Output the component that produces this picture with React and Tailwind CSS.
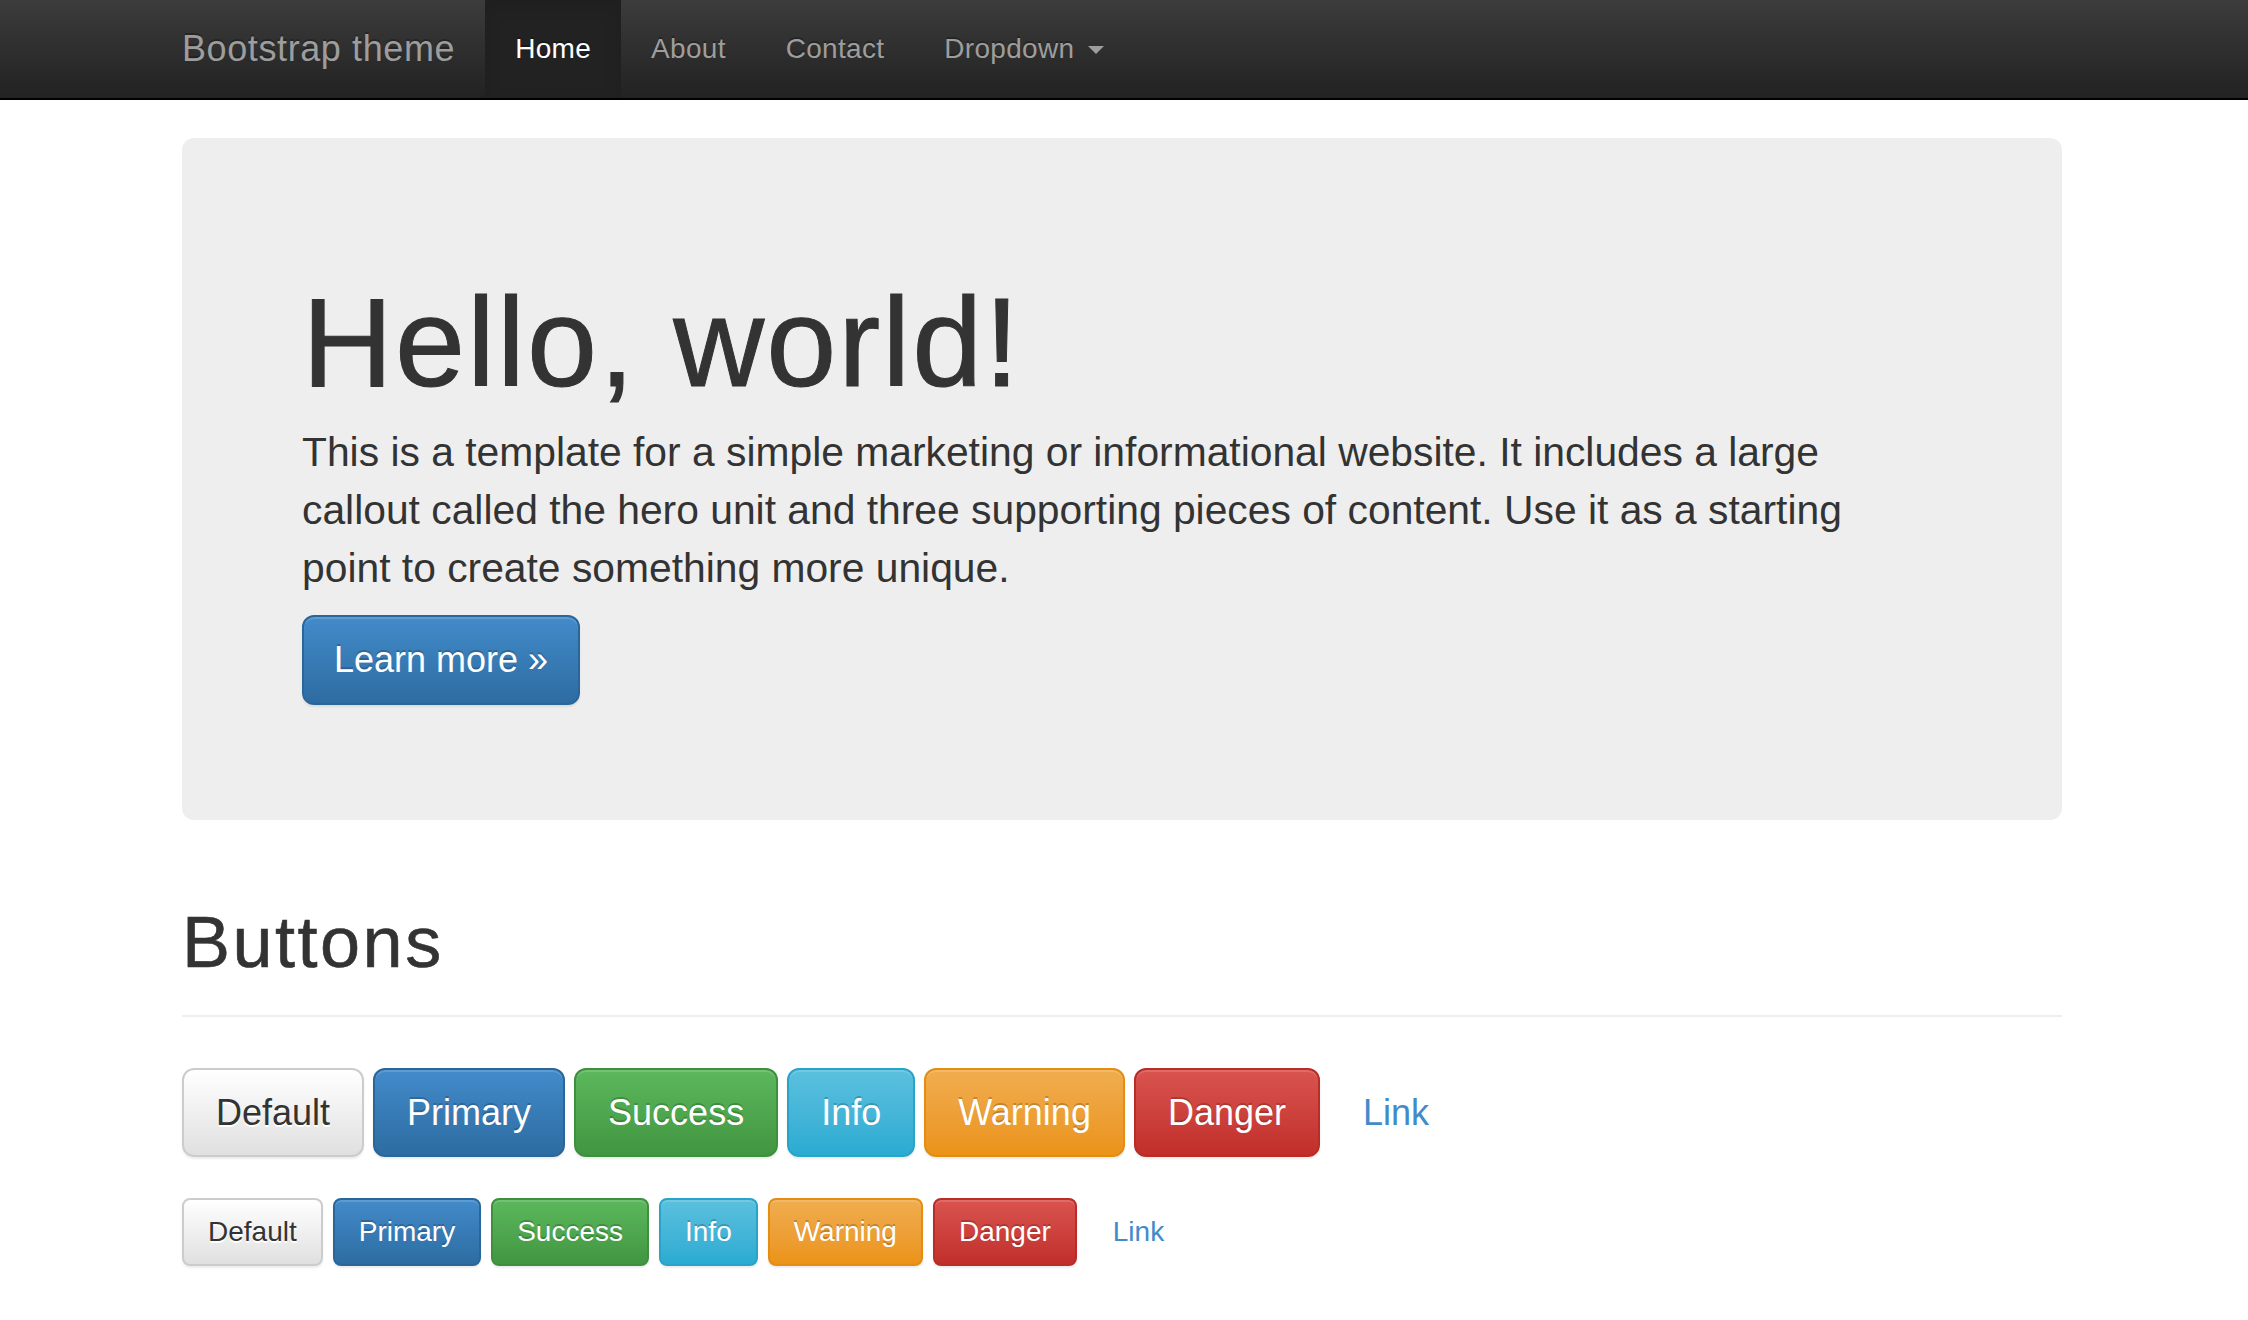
import React from 'react';

const font = { fontFamily: '"Liberation Sans", Arial, sans-serif' };

const navLinks = ['About', 'Contact'];

const lgButtons = [
  { label: 'Default', cls: 'bg-linear-to-b from-[#ffffff] to-[#e0e0e0] border-[#cccccc] text-[#333] [text-shadow:0_2px_0_#fff]' },
  { label: 'Primary', cls: 'bg-linear-to-b from-[#428bca] to-[#2d6ca2] border-[#2b669a] text-white [text-shadow:0_-2px_0_rgba(0,0,0,0.2)]' },
  { label: 'Success', cls: 'bg-linear-to-b from-[#5cb85c] to-[#419641] border-[#3e8f3e] text-white [text-shadow:0_-2px_0_rgba(0,0,0,0.2)]' },
  { label: 'Info', cls: 'bg-linear-to-b from-[#5bc0de] to-[#2aabd2] border-[#28a4c9] text-white [text-shadow:0_-2px_0_rgba(0,0,0,0.2)]' },
  { label: 'Warning', cls: 'bg-linear-to-b from-[#f0ad4e] to-[#eb9316] border-[#e38d13] text-white [text-shadow:0_-2px_0_rgba(0,0,0,0.2)]' },
  { label: 'Danger', cls: 'bg-linear-to-b from-[#d9534f] to-[#c12e2a] border-[#b92c28] text-white [text-shadow:0_-2px_0_rgba(0,0,0,0.2)]' },
];

const ButtonRow = ({ size }) => {
  const big = size === 'lg';
  const base = big
    ? 'h-[89px] px-[32px] text-[36px] rounded-[12px]'
    : 'h-[68px] px-[24px] text-[28px] rounded-[8px]';
  return (
    <div className={`flex items-center ${big ? 'gap-[9px]' : 'gap-[10px]'}`}>
      {lgButtons.map((b) => (
        <button
          key={b.label}
          className={`${base} ${b.cls} border-2 flex items-center leading-none shadow-[inset_0_2px_0_rgba(255,255,255,0.15),0_2px_2px_rgba(0,0,0,0.075)]`}
        >
          {b.label}
        </button>
      ))}
      <button className={`${base} border-2 border-transparent text-[#428bca] flex items-center leading-none`}>
        Link
      </button>
    </div>
  );
};

export default function App() {
  return (
    <div className="min-h-screen bg-white text-[#333]" style={font}>
      {/* navbar */}
      <div className="h-[100px] bg-linear-to-b from-[#3c3c3c] to-[#222222] border-b-2 border-black">
        <div className="w-[1880px] ml-[182px] flex h-[98px] items-stretch">
          <a className="flex items-center pr-[30px] text-[36px] tracking-[0.6px] text-[#9d9d9d] [text-shadow:0_-2px_0_rgba(0,0,0,0.25)]">
            Bootstrap theme
          </a>
          <a className="flex items-center px-[30px] text-[28px] tracking-[0.3px] text-white bg-[#222] shadow-[inset_0_6px_18px_rgba(0,0,0,0.1)] [text-shadow:0_-2px_0_rgba(0,0,0,0.25)]">
            Home
          </a>
          {navLinks.map((l) => (
            <a key={l} className="flex items-center px-[30px] text-[28px] tracking-[0.3px] text-[#9d9d9d] [text-shadow:0_-2px_0_rgba(0,0,0,0.25)]">
              {l}
            </a>
          ))}
          <a className="flex items-center px-[30px] text-[28px] tracking-[0.3px] text-[#9d9d9d] [text-shadow:0_-2px_0_rgba(0,0,0,0.25)]">
            Dropdown
            <span className="ml-[14px] mt-[2px] w-0 h-0 border-l-[8px] border-r-[8px] border-t-[8px] border-l-transparent border-r-transparent border-t-[#9d9d9d]" />
          </a>
        </div>
      </div>

      <div className="w-[1880px] ml-[182px]">
        {/* jumbotron */}
        <div className="mt-[38px] h-[682px] bg-[#eeeeee] rounded-[12px] pl-[120px] pt-[136px]">
          <h1 className="text-[126px] leading-[1.1] tracking-[2px] text-[#333] [-webkit-text-stroke:1px_#333]">
            Hello, world!
          </h1>
          <p className="mt-[10px] text-[40.8px] leading-[58px] text-[#333] whitespace-nowrap">
            This is a template for a simple marketing or informational website. It includes a large
            <br />
            callout called the hero unit and three supporting pieces of content. Use it as a starting
            <br />
            point to create something more unique.
          </p>
          <button className="mt-[18px] h-[90px] px-[30px] rounded-[12px] border-2 border-[#2b669a] bg-linear-to-b from-[#428bca] to-[#2d6ca2] text-white text-[36px] leading-none [text-shadow:0_-2px_0_rgba(0,0,0,0.2)] shadow-[inset_0_2px_0_rgba(255,255,255,0.15),0_2px_2px_rgba(0,0,0,0.075)]">
            Learn more »
          </button>
        </div>

        {/* page header */}
        <div className="mt-[83px] pb-[33px] border-b-2 border-[#eeeeee]">
          <h1 className="text-[72px] leading-[1.1] tracking-[2.5px] text-[#333] [-webkit-text-stroke:0.6px_#333]">Buttons</h1>
        </div>

        <div className="mt-[51px]">
          <ButtonRow size="lg" />
        </div>
        <div className="mt-[41px]">
          <ButtonRow size="md" />
        </div>
      </div>
    </div>
  );
}
